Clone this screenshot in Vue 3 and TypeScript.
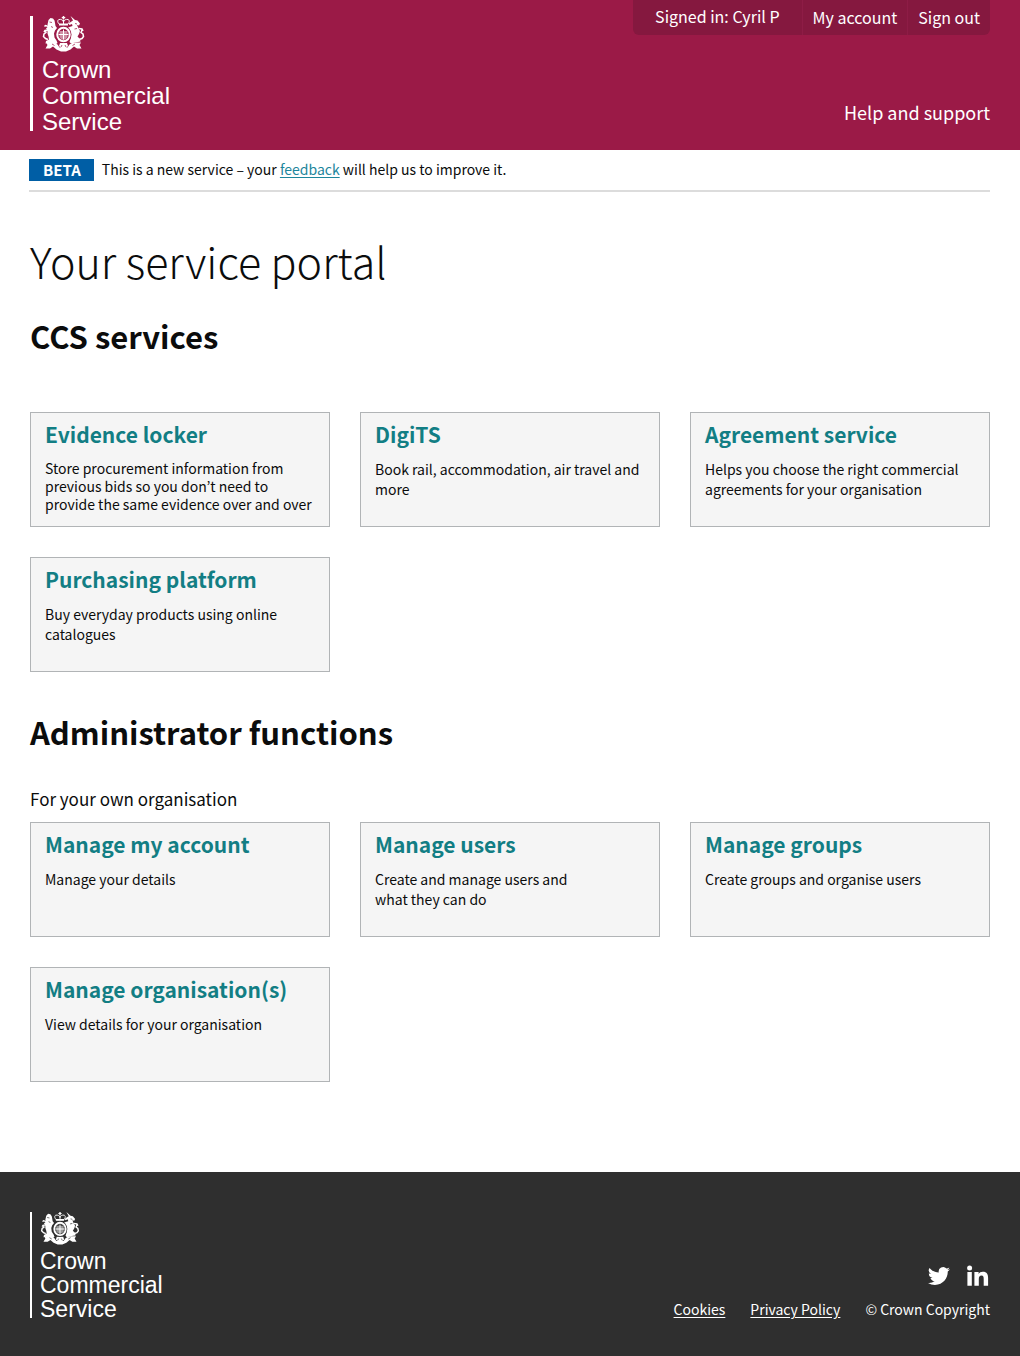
<script setup lang="ts">
interface Tile {
  title: string
  text: string
  compact?: boolean
}

const services: Tile[] = [
  {
    title: 'Evidence locker',
    text: 'Store procurement information from previous bids so you don’t need to provide the same evidence over and over',
    compact: true,
  },
  { title: 'DigiTS', text: 'Book rail, accommodation, air travel and more' },
  {
    title: 'Agreement service',
    text: 'Helps you choose the right commercial agreements for your organisation',
  },
  { title: 'Purchasing platform', text: 'Buy everyday products using online catalogues' },
]

const adminFunctions: Tile[] = [
  { title: 'Manage my account', text: 'Manage your details' },
  { title: 'Manage users', text: 'Create and manage users and\nwhat they can do' },
  { title: 'Manage groups', text: 'Create groups and organise users' },
  { title: 'Manage organisation(s)', text: 'View details for your organisation' },
]
</script>

<template>
  <div class="page">
    <svg class="symbols" aria-hidden="true">
      <symbol id="crest" viewBox="0 0 86 72">
        <g fill="currentColor" stroke="none">
          <!-- crown -->
          <path d="M41.500 0h3v2h2v2.500h-2V7h-3V4.500h-2V2h2z" />
          <path d="M35 17c-5-5-4-9-1-10 4-1 8 1 9 5 1-4 5-6 9-5 3 1 4 5-1 10z" fill="none" stroke="currentColor" stroke-width="2" />
          <path d="M42 8h2v9h-2zM34 15h18v4H34z" />
          <!-- lion -->
          <path d="M13 8l4-4 5 1 3 4 1 5 1 6 3 4-4 5-2 6 1 8 4 6 2 5-4 3-9-1-6-2-5 1 1-5 6-3-1-6-2-6 0-6-3-4 4-4-1-4z" />
          <path d="M12 47l-5-2-4-4 1-5 4-3-1-4M13 21l-6-2-2 2M13 28l-7 1-2 3" fill="none" stroke="currentColor" stroke-width="3" />
          <!-- unicorn -->
          <path d="M57 0l9 8 5 1 5 6-2 4-4-1 3 7 3 5-2 6-3 5 5 5 1 5-5 1-6 1-8 2-3-3 2-6 1-8-2-6-4-4-1-4 4-2 6-2-1-4-5 2-2-3 6-4 3-2z" />
          <path d="M74 47l6-2 3-4-1-5-4-3 2-5M73 25l7 1 2 4" fill="none" stroke="currentColor" stroke-width="3" />
          <!-- motto ribbon -->
          <path d="M8 53h16l7 4 4 6h16l4-6 7-4h16l-3 5 4 7h-9l-6-4-7 6-9 4H38l-9-4-7-6-6 4H7l4-7z" />
          <path d="M36 54h14l2 6-5 5h-8l-5-5z" />
        </g>
        <!-- garter and shield -->
        <ellipse class="ground" cx="43" cy="37" rx="16" ry="17" />
        <ellipse cx="43" cy="37" rx="12.500" ry="13.500" fill="none" stroke="currentColor" stroke-width="4" />
        <path d="M35 30h16v12l-3 4-5 2-5-2-3-4z" fill="currentColor" opacity=".5" />
        <path d="M42 27h2v20h-2zM33 36h20v2H33z" fill="currentColor" />
        <path class="cut" d="M15 12l5 1M18 21l4 2M66 15l4 1M65 26l5-1M25 59l-5-3M61 59l5-3M38 62l2-4M48 62l-2-4" fill="none" stroke-width="1.500" />
      </symbol>
    </svg>

    <header class="site-header">
      <div class="container header-inner">
        <a class="logo" href="#" aria-label="Crown Commercial Service">
          <svg class="crest" aria-hidden="true"><use href="#crest" /></svg>
          <span>Crown</span>
          <span>Commercial</span>
          <span>Service</span>
        </a>
        <div class="header-nav">
          <nav class="account" aria-label="Account">
            <span class="signed-in">Signed in: Cyril P</span>
            <a href="#">My account</a>
            <a href="#">Sign out</a>
          </nav>
          <a class="help" href="#">Help and support</a>
        </div>
      </div>
    </header>

    <div class="phase">
      <strong class="tag">BETA</strong>
      <p>This is a new service – your <a href="#">feedback</a> will help us to improve it.</p>
    </div>

    <main class="container">
      <h1>Your service portal</h1>

      <section>
        <h2>CCS services</h2>
        <ul class="tiles services">
          <li v-for="tile in services" :key="tile.title" class="tile" :class="{ compact: tile.compact }">
            <h3><a href="#">{{ tile.title }}</a></h3>
            <p>{{ tile.text }}</p>
          </li>
        </ul>
      </section>

      <section class="admin">
        <h2>Administrator functions</h2>
        <p class="lead">For your own organisation</p>
        <ul class="tiles">
          <li v-for="tile in adminFunctions" :key="tile.title" class="tile">
            <h3><a href="#">{{ tile.title }}</a></h3>
            <p>{{ tile.text }}</p>
          </li>
        </ul>
      </section>
    </main>

    <footer class="site-footer">
      <div class="container footer-inner">
        <a class="logo small" href="#" aria-label="Crown Commercial Service">
          <svg class="crest" aria-hidden="true"><use href="#crest" /></svg>
          <span>Crown</span>
          <span>Commercial</span>
          <span>Service</span>
        </a>
        <div class="footer-meta">
          <div class="social">
            <a href="#" aria-label="Twitter">
              <svg width="22" height="22" viewBox="0 0 24 24" aria-hidden="true">
                <path fill="currentColor" d="M23.95 4.57a10 10 0 0 1-2.82.77 4.96 4.96 0 0 0 2.16-2.72c-.95.55-2 .95-3.13 1.18a4.92 4.92 0 0 0-8.38 4.48C7.69 8.1 4.07 6.13 1.64 3.16a4.93 4.93 0 0 0 1.52 6.57 4.9 4.9 0 0 1-2.23-.61v.06a4.92 4.92 0 0 0 3.95 4.83 5 5 0 0 1-2.21.08 4.94 4.94 0 0 0 4.6 3.42A9.87 9.87 0 0 1 0 19.54a13.99 13.99 0 0 0 7.55 2.21c9.05 0 14-7.5 14-13.98 0-.21 0-.42-.02-.63a9.94 9.94 0 0 0 2.46-2.55z" />
              </svg>
            </a>
            <a href="#" aria-label="LinkedIn">
              <svg width="22" height="22" viewBox="0 0 22 22" aria-hidden="true">
                <circle cx="2.600" cy="3" r="2.500" fill="currentColor" />
                <path fill="currentColor" d="M.4 7h4.400v13.700H.4zM7.400 7h4.200v1.900c.8-1.300 2.200-2.200 4.200-2.200 4.200 0 5.300 2.600 5.300 6.300v7.700h-4.400v-6.800c0-1.700-.3-3.300-2.200-3.300s-2.700 1.400-2.700 3.300v6.800H7.400z" />
              </svg>
            </a>
          </div>
          <div class="legal">
            <a href="#">Cookies</a>
            <a href="#">Privacy Policy</a>
            <span>© Crown Copyright</span>
          </div>
        </div>
      </div>
    </footer>
  </div>
</template>

<style>
body {
  margin: 0;
  background: #fff;
}
</style>

<style scoped>
.page {
  display: flex;
  flex-direction: column;
  min-height: 100vh;
  color: #0b0c0c;
  font-family: "Source Sans Pro", "Noto Sans CJK KR", "Noto Sans", sans-serif;
  font-size: 14px;
  line-height: 20px;
}

.symbols {
  position: absolute;
  width: 0;
  height: 0;
}

h1,
h2,
h3,
p,
ul {
  margin: 0;
  padding: 0;
}

a {
  color: inherit;
}

.container {
  padding: 0 30px;
}

.site-header {
  background: #9b1a47;
  color: #fff;
  --ground: #9b1a47;
}

.header-inner,
.footer-inner {
  display: flex;
  justify-content: space-between;
}

.header-inner {
  min-height: 150px;
}

.logo {
  align-self: flex-start;
  display: flex;
  flex-direction: column;
  height: 115px;
  margin-top: 16px;
  padding-left: 9px;
  border-left: 3px solid #fff;
  font-family: "Liberation Sans", Arial, sans-serif;
  font-size: 24px;
  line-height: 26px;
  text-decoration: none;
}

.crest {
  flex: none;
  width: 43px;
  height: 36px;
  margin-bottom: 5px;
}

.ground {
  fill: var(--ground);
}

.cut {
  stroke: var(--ground);
}

.logo.small {
  height: 106px;
  margin-top: 40px;
  padding-left: 8px;
  border-left-width: 2px;
  font-size: 23px;
  line-height: 24px;
}

.small .crest {
  width: 40px;
  height: 33px;
  margin-bottom: 4px;
}

.header-nav {
  display: flex;
  flex-direction: column;
  align-items: flex-end;
  justify-content: space-between;
  padding-bottom: 26px;
  font-size: 16px;
}

.account {
  display: flex;
  background: #85183f;
  border-radius: 0 0 6px 6px;
  line-height: 35px;
}

.account > * {
  padding: 0 10px;
  border-left: 1px solid #8e1c46;
  text-decoration: none;
}

.account > .signed-in {
  padding: 0 22px;
  border-left: 0;
  line-height: 33px;
}

.help {
  font-size: 18px;
  line-height: 24px;
  text-decoration: none;
}

.phase {
  display: flex;
  align-items: flex-start;
  gap: 8px;
  margin: 0 30px 0 29px;
  padding: 9px 0;
  border-bottom: 2px solid #dcdcdc;
}

.phase a {
  color: #1d869c;
  text-underline-offset: 2px;
}

.tag {
  padding: 0 13px 0 14px;
  background: #005ea5;
  color: #fff;
  font-size: 15px;
  font-weight: 700;
  line-height: 22px;
}

main {
  flex: 1;
  padding-bottom: 90px;
}

h1 {
  margin-top: 38px;
  font-size: 43px;
  font-weight: 300;
  line-height: 60px;
}

h2 {
  margin-top: 24px;
  font-size: 31px;
  font-weight: 700;
  line-height: 44px;
}

.tiles {
  display: grid;
  grid-template-columns: repeat(3, 1fr);
  gap: 30px;
  list-style: none;
}

.services {
  margin-top: 54px;
}

.tile {
  box-sizing: border-box;
  min-height: 115px;
  padding: 6px 8px 8px 14px;
  background: #f5f5f5;
  border: 1px solid #b1b4b6;
}

.tile h3 {
  color: #127e84;
  font-size: 21px;
  font-weight: 700;
  line-height: 30px;
}

.tile h3 a {
  text-decoration: none;
}

.tile p {
  margin-top: 10px;
  white-space: pre-line;
}

.compact p {
  line-height: 18px;
}

.admin {
  margin-top: 38px;
}

.lead {
  margin: 33px 0 11px;
  font-size: 17px;
  line-height: 24px;
}

.site-footer {
  background: #2f2f2f;
  color: #fff;
  --ground: #2f2f2f;
}

.footer-inner {
  min-height: 184px;
}

.footer-meta {
  display: flex;
  flex-direction: column;
  align-items: flex-end;
  justify-content: flex-end;
  gap: 12px;
  padding-bottom: 37px;
}

.social {
  display: flex;
  gap: 17px;
  padding-right: 1px;
}

.social svg {
  display: block;
}

.legal {
  display: flex;
  gap: 25px;
}

.legal a {
  text-underline-offset: 2px;
}
</style>
